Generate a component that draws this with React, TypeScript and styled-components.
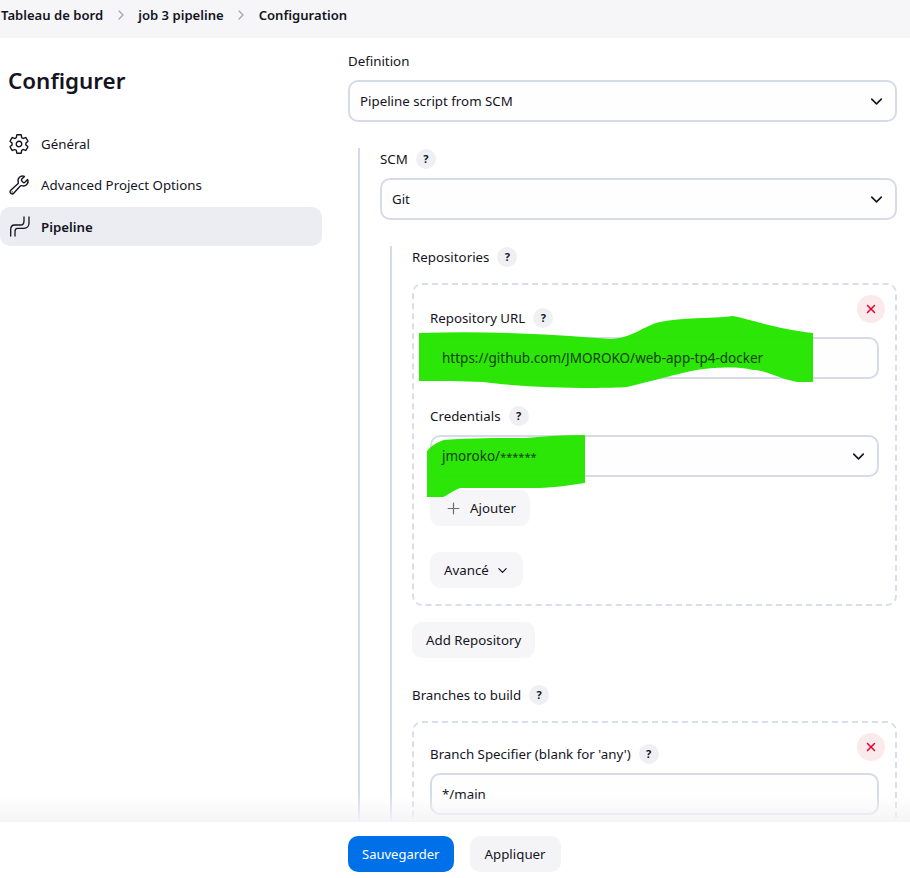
import React from 'react'
import styled, { createGlobalStyle } from 'styled-components'
import { IoAdd, IoBuildOutline, IoChevronDown, IoChevronForward, IoClose, IoSettingsOutline } from 'react-icons/io5'

const GlobalStyle = createGlobalStyle`
  html, body {
    margin: 0;
    height: 100%;
    overflow: hidden;
    background: #fff;
  }
  * {
    box-sizing: border-box;
  }
`

function PipelineIcon() {
  return (
    <svg width="22" height="22" viewBox="0 0 22 22" fill="none" stroke="#14141f" strokeWidth="1.3" strokeLinecap="round" strokeLinejoin="round">
      <path d="M2.7 20V13.5C2.7 10.5 4 9 6.7 9H12.7C15 9 16 7.5 16 4.7V1" />
      <path d="M7 20V15.7C7 13.5 8 12.3 9.3 12.3H16C19 12.3 21 10 21 7V1" />
    </svg>
  )
}

function Help() {
  return <HelpBadge>?</HelpBadge>
}

function Delete() {
  return (
    <DeleteButton>
      <IoClose size={16} />
    </DeleteButton>
  )
}

export default function App() {
  return (
    <Page>
      <GlobalStyle />
      <Breadcrumbs>
        <Crumb>Tableau de bord</Crumb>
        <IoChevronForward size={14} color="#a5a7b2" />
        <Crumb>job 3 pipeline</Crumb>
        <IoChevronForward size={14} color="#a5a7b2" />
        <Crumb>Configuration</Crumb>
      </Breadcrumbs>
      <Layout>
        <Sidebar>
          <Title>Configurer</Title>
          <NavList>
            <NavItem>
              <IoSettingsOutline size={22} />
              Général
            </NavItem>
            <NavItem>
              <IoBuildOutline size={22} />
              Advanced Project Options
            </NavItem>
            <NavItem $active>
              <PipelineIcon />
              Pipeline
            </NavItem>
          </NavList>
        </Sidebar>
        <Main>
          <Label>Definition</Label>
          <SelectBox>
            Pipeline script from SCM
            <IoChevronDown size={17} />
          </SelectBox>
          <Nested $top={26}>
            <Label>
              SCM <Help />
            </Label>
            <SelectBox>
              Git
              <IoChevronDown size={17} />
            </SelectBox>
            <Nested $top={26}>
              <Label>
                Repositories <Help />
              </Label>
              <RepeatBox $pad={24}>
                <Delete />
                <Label>
                  Repository URL <Help />
                </Label>
                <FieldWrap>
                  <InputBox>
                    <ScribbledText>https://github.com/JMOROKO/web-app-tp4-docker</ScribbledText>
                  </InputBox>
                  <ScribbleUrl viewBox="0 0 395 72">
                    <path d="M1 17C60 15 120 17 192 23C215 22 225 10 242 6C265 1 290 3 315 0C335 4 360 13 395 17V66H379C360 62 348 54 335 54C320 50 300 52 295 52C270 54 255 60 209 71C180 73 110 72 65 66C45 65 20 65 1 65Z" />
                  </ScribbleUrl>
                </FieldWrap>
                <Label $top={28}>
                  Credentials <Help />
                </Label>
                <FieldWrap>
                  <SelectBox>
                    <ScribbledText>
                      jmoroko/<Stars>******</Stars>
                    </ScribbledText>
                    <IoChevronDown size={17} />
                  </SelectBox>
                  <ScribbleCreds viewBox="0 0 160 63">
                    <path d="M1 16C6 10 12 7 18 5C40 3 74 3 100 3C120 1 140 0 159 0V48C140 51 122 53 107 53H34C26 56 22 60 17 62H1Z" />
                  </ScribbleCreds>
                </FieldWrap>
                <GhostButton $top={13}>
                  <IoAdd size={19} color="#6b6c78" />
                  Ajouter
                </GhostButton>
                <GhostButton $top={26}>
                  Avancé
                  <IoChevronDown size={13} />
                </GhostButton>
              </RepeatBox>
              <GhostButton $top={16}>Add Repository</GhostButton>
              <Label $top={28}>
                Branches to build <Help />
              </Label>
              <RepeatBox $pad={22}>
                <Delete />
                <Label>
                  Branch Specifier (blank for 'any') <Help />
                </Label>
                <InputBox>*/main</InputBox>
              </RepeatBox>
            </Nested>
          </Nested>
        </Main>
      </Layout>
      <BottomBar>
        <SaveButton>Sauvegarder</SaveButton>
        <ApplyButton>Appliquer</ApplyButton>
      </BottomBar>
    </Page>
  )
}

const Page = styled.div`
  position: relative;
  height: 878px;
  overflow: hidden;
  display: flex;
  flex-direction: column;
  color: #14141f;
  font-family: 'Noto Sans', 'Liberation Sans', sans-serif;
  font-size: 13.3px;
`

const Breadcrumbs = styled.nav`
  flex: 0 0 38px;
  display: flex;
  align-items: center;
  gap: 10.5px;
  padding: 0 0 8px 1px;
  background: #f6f6f8;
`

const Crumb = styled.span`
  font-weight: 600;
  font-size: 13.1px;
`

const Layout = styled.div`
  flex: 1;
  display: grid;
  grid-template-columns: 322px 1fr;
  column-gap: 26px;
  padding-right: 13px;
  min-height: 0;
`

const Sidebar = styled.aside`
  display: flex;
  flex-direction: column;
`

const Title = styled.h1`
  margin: 27px 0 0 8px;
  font-size: 22.4px;
  line-height: 32px;
  font-weight: 600;
`

const NavList = styled.div`
  margin-top: 27px;
  display: flex;
  flex-direction: column;
  gap: 2.5px;
`

const NavItem = styled.div<{ $active?: boolean }>`
  height: 39px;
  display: flex;
  align-items: center;
  gap: 11px;
  padding-left: 8px;
  border-radius: 10px;
  background: ${(p) => (p.$active ? '#ecedf2' : 'transparent')};
  font-weight: ${(p) => (p.$active ? 600 : 400)};
`

const Main = styled.main`
  display: flex;
  flex-direction: column;
  align-items: stretch;
  padding-top: 14px;
`

const Label = styled.div<{ $top?: number }>`
  display: flex;
  align-items: center;
  gap: 8px;
  height: 18px;
  margin-top: ${(p) => p.$top ?? 0}px;
  margin-bottom: 10px;
  line-height: 18px;
`

const HelpBadge = styled.span`
  width: 20px;
  height: 20px;
  flex: none;
  display: flex;
  align-items: center;
  justify-content: center;
  border-radius: 50%;
  background: #eef0f4;
  font-size: 11px;
  font-weight: 700;
`

const SelectBox = styled.div`
  height: 42px;
  display: flex;
  align-items: center;
  justify-content: space-between;
  padding: 0 10px 0 10px;
  border: 2px solid #d6dbe8;
  border-radius: 10px;
  background: #fefefe;
`

const InputBox = styled.div`
  height: 42px;
  display: flex;
  align-items: center;
  padding: 0 10px;
  border: 2px solid #d6dbe8;
  border-radius: 10px;
  background: #fefefe;
`

const Nested = styled.div<{ $top: number }>`
  margin-top: ${(p) => p.$top}px;
  margin-left: 10px;
  padding-left: 20px;
  padding-top: 2px;
  border-left: 2px solid #d6dbe8;
  display: flex;
  flex-direction: column;
`

const RepeatBox = styled.div<{ $pad: number }>`
  position: relative;
  margin-top: 7px;
  padding: ${(p) => p.$pad}px 16px 16px;
  border: 2px dashed #d9deea;
  border-radius: 10px;
  display: flex;
  flex-direction: column;
  align-items: stretch;
`

const DeleteButton = styled.div`
  position: absolute;
  top: 10px;
  right: 10px;
  width: 28px;
  height: 28px;
  display: flex;
  align-items: center;
  justify-content: center;
  border-radius: 50%;
  background: #fbeaec;
  color: #e6002e;
`

const FieldWrap = styled.div`
  position: relative;
`

const ScribbledText = styled.span`
  position: relative;
  z-index: 1;
  font-size: 13.5px;
  color: #173f0c;
`

const Stars = styled.span`
  font-size: 11px;
`

const ScribbleUrl = styled.svg`
  position: absolute;
  left: -12px;
  top: -21px;
  width: 395px;
  height: 72px;
  fill: #26e600;
  opacity: 0.97;
`

const ScribbleCreds = styled.svg`
  position: absolute;
  left: -4px;
  top: 0;
  width: 160px;
  height: 63px;
  fill: #26e600;
  opacity: 0.97;
`

const GhostButton = styled.div<{ $top: number }>`
  align-self: flex-start;
  height: 36px;
  margin-top: ${(p) => p.$top}px;
  display: flex;
  align-items: center;
  gap: 7px;
  padding: 0 14px;
  border-radius: 10px;
  background: #f6f6f8;
`

const BottomBar = styled.div`
  position: absolute;
  left: 0;
  right: 0;
  bottom: 0;
  height: 56px;
  display: flex;
  align-items: flex-start;
  gap: 16px;
  padding: 14px 0 0 348px;
  background: #fff;

  &::before {
    content: '';
    position: absolute;
    left: 0;
    right: 0;
    top: -26px;
    height: 26px;
    background: linear-gradient(to bottom, rgba(246, 246, 248, 0), rgba(244, 244, 246, 0.95));
  }
`

const SaveButton = styled.div`
  height: 36px;
  padding: 0 14px;
  display: flex;
  align-items: center;
  border-radius: 10px;
  background: #0070e8;
  color: #fff;
  font-size: 13px;
`

const ApplyButton = styled.div`
  height: 36px;
  padding: 0 15px;
  display: flex;
  align-items: center;
  border-radius: 10px;
  background: #f4f4f7;
`
